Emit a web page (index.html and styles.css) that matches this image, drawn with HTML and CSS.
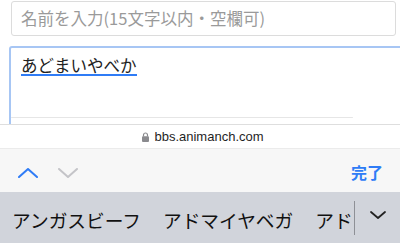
FILE: index.html
```html
<!DOCTYPE html>
<html lang="ja">
<head>
    <meta charset="UTF-8">
    <meta name="viewport" content="width=device-width, initial-scale=1.0">
    <title>書き込み</title>
    <link rel="stylesheet" href="styles.css">
</head>
<body>

    <div class="page">
        <div class="name-input">名前を入力(15文字以内・空欄可)</div>
        <div class="body-input">
            <span class="composing">あどまいやべか</span>
            <div class="inner-edge"></div>
        </div>
    </div>

    <div class="address-bar">
        <svg class="lock" width="7" height="10" viewBox="0 0 7 10">
            <path d="M1.5 4.5V3a2 2 0 0 1 4 0v1.5" fill="none" stroke="#8a8a8e" stroke-width="1.2"/>
            <rect x="0" y="4.3" width="7" height="5.7" rx="1" fill="#8a8a8e"/>
        </svg>
        <span>bbs.animanch.com</span>
    </div>

    <div class="toolbar">
        <div class="nav">
            <svg width="20" height="10" viewBox="0 0 20 10">
                <path d="M1 9L10 1l9 8" fill="none" stroke="#2f7cf6" stroke-width="2" stroke-linecap="round" stroke-linejoin="round"/>
            </svg>
            <svg width="20" height="10" viewBox="0 0 20 10">
                <path d="M1 1l9 8 9-8" fill="none" stroke="#c4c4c8" stroke-width="2" stroke-linecap="round" stroke-linejoin="round"/>
            </svg>
        </div>
        <div class="done">完了</div>
    </div>

    <div class="suggestions">
        <span class="word">アンガスビーフ</span>
        <span class="word">アドマイヤベガ</span>
        <span class="word typed">アド</span>
        <span class="caret"></span>
        <svg class="expand" width="16" height="8" viewBox="0 0 16 8">
            <path d="M1 1l7 6 7-6" fill="none" stroke="#222" stroke-width="1.8" stroke-linecap="round" stroke-linejoin="round"/>
        </svg>
    </div>

</body>
</html>
```

FILE: styles.css
```css
body {
    margin: 0;
    width: 400px;
    height: 243px;
    overflow: hidden;
    background-color: #fff;
    font-family: "Noto Sans CJK JP", "Liberation Sans", sans-serif;
}
.page {
    height: 123px;
    overflow: hidden;
    padding-top: 1px;
}
.name-input {
    margin-left: 11px;
    margin-right: 4px;
    border: 1px solid #dcdcdc;
    border-radius: 3px;
    box-sizing: border-box;
    height: 35px;
    padding-left: 9px;
    font-size: 16.5px;
    line-height: 33px;
    color: #9a9a9a;
}
.body-input {
    position: relative;
    margin-top: 10px;
    margin-left: 9px;
    margin-right: -5px;
    height: 90px;
    border: 2px solid #a7c6f4;
    border-radius: 3px;
    padding: 8px 10px;
    font-size: 16.5px;
    line-height: 18px;
    color: #222;
}
.composing {
    display: inline-block;
    border-bottom: 2px solid #2f7cf6;
    line-height: 17px;
}
.inner-edge {
    position: absolute;
    left: 0;
    top: 69px;
    width: 342px;
    height: 1px;
    background-color: #e6e6e6;
    border-radius: 1px;
}
.address-bar {
    height: 23px;
    border-top: 1px solid #dedede;
    display: flex;
    align-items: center;
    justify-content: center;
    gap: 5px;
    padding-left: 6px;
    font-family: "Liberation Sans", sans-serif;
    font-size: 13px;
    color: #1f1f1f;
}
.toolbar {
    height: 43px;
    background-color: #f7f7f7;
    border-top: 1px solid #ebebeb;
    display: flex;
    align-items: center;
    justify-content: space-between;
    padding: 0 17px 0 18px;
}
.nav {
    display: flex;
    gap: 20px;
    padding-top: 4px;
}
.done {
    font-size: 16px;
    font-weight: bold;
    color: #2f7cf6;
    padding-top: 2px;
}
.suggestions {
    height: 52px;
    background-color: #d1d4db;
    display: flex;
    align-items: center;
    padding-left: 12px;
    font-size: 18.7px;
    color: #111;
}
.word {
    margin-right: 22px;
    padding-top: 2px;
}
.word.typed {
    margin-right: 0;
}
.caret {
    width: 1px;
    height: 34px;
    background-color: #8e9096;
    margin-left: 1px;
}
.expand {
    margin-left: 15px;
    margin-top: -6px;
}
```
